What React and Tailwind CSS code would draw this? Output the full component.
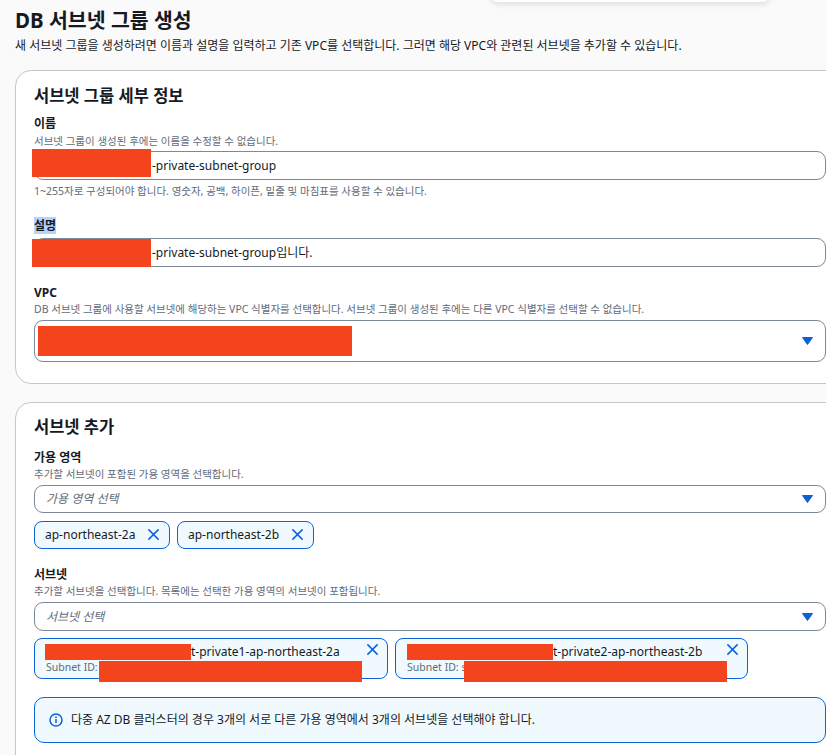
import React from "react";

const FONT = "font-['Noto_Sans','Noto_Sans_CJK_KR',sans-serif]";

function Caret() {
  return (
    <svg width="11" height="8" viewBox="0 0 11 8" className="absolute right-[12px] top-1/2 -translate-y-1/2">
      <path d="M0.5 0.5H10.5L5.5 7.5Z" fill="#0f5fd0" stroke="#0f5fd0" strokeLinejoin="round" />
    </svg>
  );
}

function X({ size = 14 }) {
  return (
    <svg width={size} height={size} viewBox="0 0 14 14" fill="none" stroke="#0f62d6" strokeWidth="1.6">
      <path d="M1.5 1.5L12.5 12.5M12.5 1.5L1.5 12.5" />
    </svg>
  );
}

function Red({ className }) {
  return <div className={"absolute bg-[#f4441d] " + className} />;
}

function Label({ children, className = "" }) {
  return <div className={"text-[12px] leading-[16px] font-bold text-[#16191f] " + className}>{children}</div>;
}

function Hint({ children, className = "" }) {
  return <div className={"text-[10.5px] leading-[14px] text-[#5f6b7a] whitespace-nowrap " + className}>{children}</div>;
}

function Field({ className = "", children }) {
  return (
    <div className={"relative bg-white border border-[#7d8998] rounded-[9px] flex items-center " + className}>
      {children}
    </div>
  );
}

function Chip({ children, className = "" }) {
  return (
    <div className={"relative h-[28px] bg-[#f0fafe] border border-[#0f62d6] rounded-[8px] flex items-center text-[12px] text-[#16191f] " + className}>
      {children}
    </div>
  );
}

function SubnetChip({ name, width, pad, redA, redB }) {
  return (
    <div className={"relative h-[41px] bg-[#f0fafe] border border-[#0f62d6] rounded-[8px] text-[#16191f] " + width}>
      <div className={"absolute top-[4px] text-[12px] leading-[17px] whitespace-nowrap " + pad}>{name}</div>
      <div className="absolute left-[11px] top-[21px] text-[10.5px] leading-[14px] text-[#5f6b7a]">Subnet ID: s</div>
      <div className="absolute right-[8px] top-[4px]"><X size={13} /></div>
      <Red className={redA} />
      <Red className={redB} />
    </div>
  );
}

export default function App() {
  return (
    <div className={"relative w-[826px] h-[755px] overflow-hidden bg-[#fafafa] " + FONT}>
      <div className="absolute left-[490px] top-[-20px] w-[280px] h-[22px] rounded-[8px] bg-white shadow-[0_2px_6px_rgba(0,0,0,0.12)]" />
      <div className="pl-[15px] w-[845px]">
        <h1 className="pt-[6px] h-[34px] text-[20.5px] leading-[28px] font-bold text-[#16191f]">DB 서브넷 그룹 생성</h1>
        <p className="mt-[3px] h-[18px] text-[12px] leading-[18px] text-[#16191f] whitespace-nowrap">
          새 서브넷 그룹을 생성하려면 이름과 설명을 입력하고 기존 VPC를 선택합니다. 그러면 해당 VPC와 관련된 서브넷을 추가할 수 있습니다.
        </p>

        <section className="mt-[15px] h-[314px] bg-white border border-[#c6c6cd] rounded-[16px] pl-[18px] pr-[18px]">
          <h2 className="mt-[13px] h-[24px] text-[16.5px] leading-[24px] font-bold text-[#16191f]">서브넷 그룹 세부 정보</h2>
          <Label className="mt-[8px]">이름</Label>
          <Hint className="mt-[2px]">서브넷 그룹이 생성된 후에는 이름을 수정할 수 없습니다.</Hint>
          <Field className="relative mt-[3px] h-[29px] pl-[117px] text-[12px] text-[#16191f]">
            <span>-private-subnet-group</span>
            <Red className="left-[-3px] top-[-3px] w-[119px] h-[28px]" />
          </Field>
          <Hint className="mt-[4px]">1~255자로 구성되어야 합니다. 영숫자, 공백, 하이픈, 밑줄 및 마침표를 사용할 수 있습니다.</Hint>

          <Label className="mt-[20px]"><span className="bg-[#b3d4fc]">설명</span></Label>
          <Field className="relative mt-[4px] h-[29px] pl-[117px] text-[12px] text-[#16191f]">
            <span>-private-subnet-group입니다.</span>
            <Red className="left-[-3px] top-[0px] w-[119px] h-[28px]" />
          </Field>

          <Label className="mt-[18px]">VPC</Label>
          <Hint className="mt-[1px]">DB 서브넷 그룹에 사용할 서브넷에 해당하는 VPC 식별자를 선택합니다. 서브넷 그룹이 생성된 후에는 다른 VPC 식별자를 선택할 수 없습니다.</Hint>
          <Field className="mt-[4px] h-[42px]">
            <Red className="left-[3px] top-[5px] w-[314px] h-[30px]" />
            <Caret />
          </Field>
        </section>

        <section className="mt-[18px] h-[400px] bg-white border border-[#c6c6cd] rounded-[16px] pl-[18px] pr-[18px]">
          <h2 className="mt-[12px] h-[24px] text-[16.5px] leading-[24px] font-bold text-[#16191f]">서브넷 추가</h2>
          <Label className="mt-[11px]">가용 영역</Label>
          <Hint className="mt-[1px]">추가할 서브넷이 포함된 가용 영역을 선택합니다.</Hint>
          <Field className="mt-[4px] h-[28px] pl-[11px] text-[12px] italic text-[#5f6b7a]">
            가용 영역 선택
            <Caret />
          </Field>
          <div className="mt-[8px] flex gap-[7px]">
            <Chip className="w-[136px] pl-[10px]">
              <span>ap-northeast-2a</span>
              <span className="absolute right-[9px] top-[6px]"><X size={13} /></span>
            </Chip>
            <Chip className="w-[137px] pl-[10px]">
              <span>ap-northeast-2b</span>
              <span className="absolute right-[9px] top-[6px]"><X size={13} /></span>
            </Chip>
          </div>
          <Label className="mt-[18px]">서브넷</Label>
          <Hint className="mt-[1px]">추가할 서브넷을 선택합니다. 목록에는 선택한 가용 영역의 서브넷이 포함됩니다.</Hint>
          <Field className="mt-[4px] h-[29px] pl-[11px] text-[12px] italic text-[#5f6b7a]">
            서브넷 선택
            <Caret />
          </Field>
          <div className="mt-[7px] flex gap-[7px]">
            <SubnetChip
              name="t-private1-ap-northeast-2a"
              width="w-[354px]"
              pad="left-[156px]"
              redA="left-[10px] top-[5px] w-[146px] h-[16px]"
              redB="left-[64px] top-[22px] w-[263px] h-[21px]"
            />
            <SubnetChip
              name="t-private2-ap-northeast-2b"
              width="w-[353px]"
              pad="left-[157px]"
              redA="left-[11px] top-[5px] w-[146px] h-[16px]"
              redB="left-[68px] top-[22px] w-[263px] h-[21px]"
            />
          </div>
          <div className="mt-[18px] h-[46px] bg-[#f0fafe] border border-[#0f62d6] rounded-[10px] flex items-center pl-[14px] gap-[8px] text-[12px] text-[#16191f]">
            <svg width="14" height="14" viewBox="0 0 14 14" fill="none" stroke="#0f62d6" strokeWidth="1.5">
              <circle cx="7" cy="7" r="6" />
              <path d="M7 6v4.2M7 3.4v1.5" />
            </svg>
            <span>다중 AZ DB 클러스터의 경우 3개의 서로 다른 가용 영역에서 3개의 서브넷을 선택해야 합니다.</span>
          </div>
        </section>
      </div>
    </div>
  );
}
